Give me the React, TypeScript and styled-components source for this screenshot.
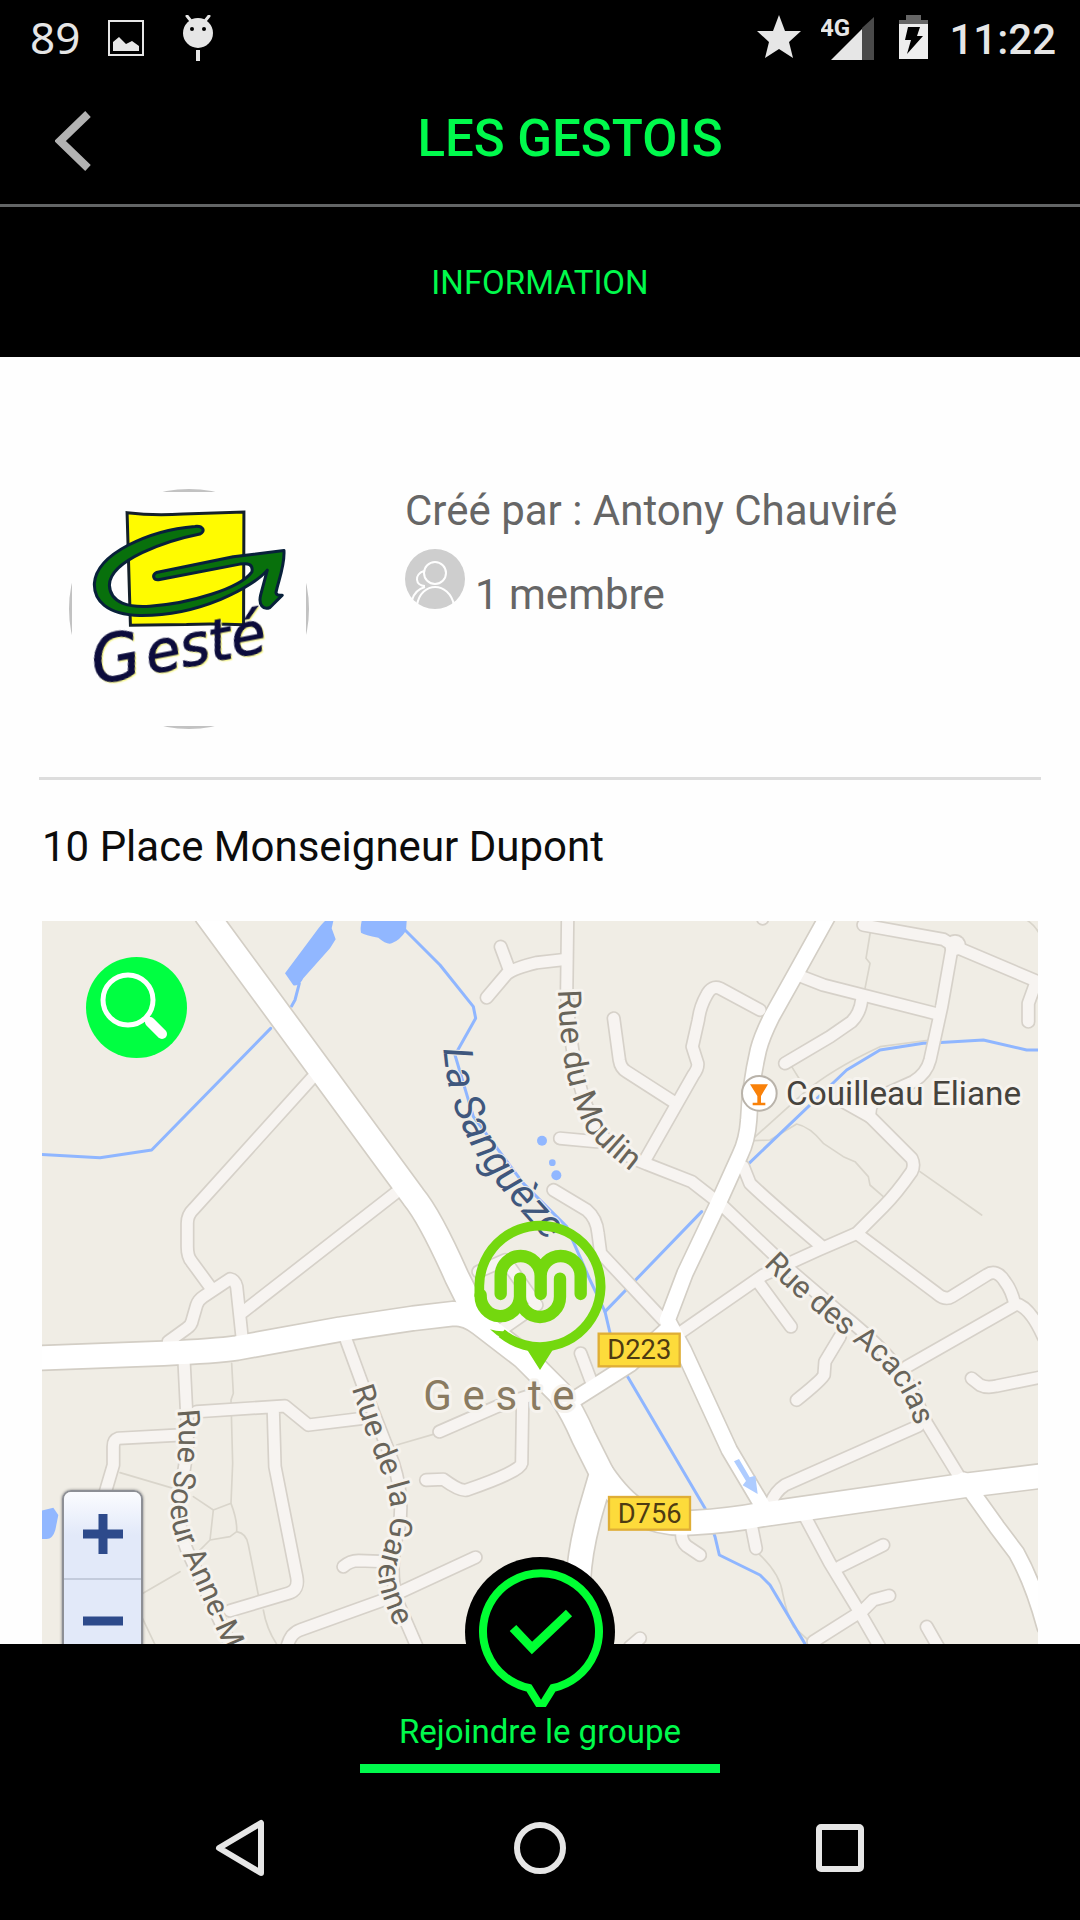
import React from "react";
import styled, { createGlobalStyle } from "styled-components";

const GREEN = "#00fa4c";

const GlobalStyle = createGlobalStyle`
  * { box-sizing: border-box; }
  body { margin: 0; background: #000; font-family: Roboto, "Noto Sans", sans-serif; }
  button { border: 0; padding: 0; margin: 0; background: none; font: inherit; color: inherit; cursor: pointer; }
  svg { display: block; }
`;

const Screen = styled.div`
  display: flex;
  flex-direction: column;
  min-height: 100vh;
  background: #000;
`;

const StatusBar = styled.div`
  display: flex;
  align-items: center;
  justify-content: space-between;
  height: 75px;
  padding: 0 24px 0 30px;
  color: #e6e6e6;
`;

const StatusGroup = styled.div<{ $gap: number }>`
  display: flex;
  align-items: center;
  gap: ${(p) => p.$gap}px;
`;

const BatteryLevel = styled.span`
  padding-bottom: 2px;
  font: 400 44px/48px "Noto Sans", sans-serif;
`;

const Clock = styled.span`
  font-size: 42px;
  line-height: 48px;
  font-weight: 500;
  padding-top: 4px;
`;

const Header = styled.header`
  display: flex;
  align-items: center;
  height: 132px;
  padding-right: 60px;
  border-bottom: 3px solid #636566;
`;

const BackButton = styled.button`
  display: flex;
  justify-content: center;
  width: 120px;
  padding: 2px 0 0 26px;
`;

const Title = styled.h1`
  flex: 1;
  margin: 0;
  padding-bottom: 2px;
  text-align: center;
  color: ${GREEN};
  font-size: 51px;
  line-height: 60px;
  font-weight: 500;
`;

const TabBar = styled.nav`
  display: flex;
  justify-content: center;
  align-items: center;
  height: 150px;
  padding-top: 2px;
`;

const Tab = styled.button`
  color: ${GREEN};
  font-size: 33px;
  line-height: 40px;
`;

const Content = styled.main`
  flex: 1;
  display: flex;
  flex-direction: column;
  padding: 132px 39px 0;
  background: #fefefe;
`;

const Profile = styled.section`
  display: flex;
  gap: 96px;
  padding: 0 30px 48px;
  border-bottom: 3px solid #dddddd;
`;

const Details = styled.div`
  color: #666;
  font-size: 42px;
  line-height: 44px;
`;

const Creator = styled.p`
  margin: 0;
`;

const Members = styled.p`
  display: flex;
  align-items: flex-start;
  gap: 10px;
  margin: 16px 0 0;
`;

const MemberCount = styled.span`
  padding-top: 24px;
`;

const Address = styled.p`
  margin: 0;
  padding: 43px 3px 50px;
  color: #0c0c0c;
  font-size: 42px;
  line-height: 48px;
`;

const MapFrame = styled.section`
  position: relative;
  flex: 1;
  display: flex;
  min-height: 480px;
  margin: 0 3px;
  overflow: hidden;
  background: #f0ede5;
`;

const MapDrawing = styled.svg`
  flex: 1;
  width: 100%;
  height: 723px;
  font-family: Roboto, sans-serif;
`;

const SearchButton = styled.button`
  position: absolute;
  top: 36px;
  left: 44px;
  width: 101px;
  height: 101px;
  border-radius: 50%;
  background: #00ff41;
`;

const ZoomControl = styled.div`
  position: absolute;
  bottom: -22px;
  left: 20px;
  display: flex;
  flex-direction: column;
  width: 81px;
  border: 2px solid #8d8f95;
  border-radius: 9px;
  box-shadow: 0 0 3px #777;
  overflow: hidden;
`;

const ZoomButton = styled.button<{ $first?: boolean }>`
  display: flex;
  align-items: center;
  justify-content: center;
  height: 86px;
  padding-bottom: 2px;
  border-top: ${(p) => (p.$first ? "0" : "2px solid #c3cbdc")};
  background: ${(p) => (p.$first ? "linear-gradient(#fbfcff, #e2e9f9 50%)" : "#e2e9f9")};
`;

const Footer = styled.footer`
  position: relative;
  display: flex;
  justify-content: center;
  height: 129px;
`;

const JoinButton = styled.button`
  display: flex;
  align-items: flex-end;
  justify-content: center;
  width: 360px;
  padding-bottom: 12px;
  border-bottom: 9px solid ${GREEN};
  color: ${GREEN};
  font-size: 33px;
  line-height: 40px;
`;

const JoinBadge = styled.span`
  position: absolute;
  top: -87px;
  left: 50%;
  width: 150px;
  height: 150px;
  margin-left: -75px;
  border-radius: 50%;
  background: #000;
`;

const SystemNav = styled.nav`
  display: flex;
  height: 147px;
  padding: 3px 90px 0;
`;

const NavButton = styled.button`
  flex: 1;
  display: flex;
  align-items: center;
  justify-content: center;
`;

type Point = string;

const waterLines: Point[] = [
  "M20 763L210 773L365 750L722 385M785 318L795 300L808 250",
  "M1125 90L1230 195L1330 320L1337 355L1275 465L1330 650L1480 850L1530 900L1610 980L1680 1140L1725 1235L1745 1320L1790 1425L2025 1825L2055 1910L2068 1965L2190 2025L2220 2055L2330 2240",
  "M1725 1235L2015 935M2157 790L2450 510L2550 450L2680 430L2720 428L2860 420L2990 450L3030 450",
];

const lakes: Point[] = [
  "M885 63L910 63L905 85L917 118L900 145L820 235Q808 260 790 256L765 220L860 92Q875 72 885 63Z",
  "M995 63Q990 85 993 98Q1005 105 1045 113Q1070 135 1085 130Q1110 120 1128 92L1130 63Z",
  "M30 1833L70 1823L85 1845L76 1890Q68 1917 50 1917L30 1917Z",
];

const footpaths: Point[] = [
  "M605 1390L610 1480L603 1500L608 1690L603 1810L550 1830L490 1790M270 1718L430 1765M550 1830L540 1920L500 1960M603 1810Q622 1860 620 1895L600 1910L540 1920M620 1895Q650 1900 655 1935L685 2085M700 2130Q710 2190 745 2240M330 2085L450 2015M335 2150L378 2240M1100 1635L1220 1600",
  "M2522 90L2508 175L2520 190L2505 265M2285 500L2310 540M2170 715L2320 580Q2400 510 2550 440L2700 420M2170 722L2220 720L2300 672Q2340 680 2380 730L2440 770L2475 785L2515 830L2520 855L2560 890M2670 815L2855 945M2990 60Q3015 75 3030 105",
  "M2185 1960Q2250 2020 2258 2080Q2270 2140 2290 2180L2340 2225",
];

const streets: Point[] = [
  "M845 535L490 928Q472 945 472 970L472 1040Q472 1070 485 1085L540 1160",
  "M1095 880L640 1235",
  "M415 1325L470 1285Q485 1275 487 1260L500 1215Q505 1200 520 1190L600 1137Q615 1140 620 1160L636 1310",
  "M1370 293L1430 222Q1450 205 1520 188L1610 178M1412 140L1438 210",
  "M1613 50L1610 280Q1630 600 1720 710Q1770 765 1850 792L1985 845L2075 915L2280 1110L2420 1230Q2600 1370 2650 1480L2690 1570L2800 1750",
  "M1590 715L1700 725",
  "M1751 355L1768 480Q1772 505 1790 515L1930 605",
  "M2190 330L2070 265Q2045 255 2030 285Q2010 320 2005 360L1987 440L2003 490Q2005 505 1990 525L1845 780",
  "M2500 75L2740 118L2775 140L3040 252",
  "M2765 150L2735 320L2700 480Q2690 520 2650 545L2560 585Q2515 600 2520 650L2645 775Q2655 795 2645 815Q2600 880 2560 920L2480 1000L2365 1050L2200 1125L1955 1295",
  "M2315 230L2380 255L2715 340",
  "M2495 300Q2490 340 2465 365L2400 410L2265 490",
  "M3015 255L2995 310L2995 365",
  "M2440 605L2520 650",
  "M2140 800L2160 850Q2200 890 2370 1035",
  "M2480 1000L2720 1180Q2745 1202 2765 1190L2870 1125Q2900 1105 2925 1145Q2945 1170 2955 1215L2630 1400M2955 1210Q3000 1220 3040 1310",
  "M2180 1140L2283 1280",
  "M2430 1310L2385 1385L2382 1425Q2375 1440 2300 1500",
  "M2825 1435L2850 1455Q2870 1465 2900 1458L3040 1430",
  "M2665 1578L2265 1755Q2235 1775 2222 1810",
  "M1955 1905Q1955 1925 1970 1938L2010 1965",
  "M2165 1880L2178 1945M2325 1850L2400 1990L2485 2130L2560 2260M2430 2000L2560 1935M2350 2225L2500 2130L2530 2100L2578 2087M2690 2180L2730 2250M1800 2240L1830 2215",
  "M1652 1360L1682 1440M1570 870L1670 930Q1700 955 1704 1000L1712 1060L1900 1260",
  "M462 1380L470 1540Q480 1650 450 1770Q435 1880 480 1970L610 2250",
  "M500 1535L765 1518L835 1575L1000 1555M730 1535L735 1700L800 2030Q808 2070 775 2080L600 2132",
  "M450 1605L265 1615Q250 1620 250 1640L250 1695L222 1790",
  "M945 1310L1000 1460L1090 1690Q1125 1800 1105 1890Q1075 2000 1100 2100L1165 2250",
  "M1228 1595L1400 1520L1490 1490M1478 1500L1475 1690Q1470 1715 1310 1770Q1290 1775 1240 1738L1188 1740",
  "M940 2000Q960 1982 985 1982L1070 1985M1337 1972L1060 2100L810 2190Q780 2200 770 2245",
  "M1345 1115L1425 1080L1520 1215L1405 1295",
];

const mediumRoads: Point[] = [
  "M2392 50L2295 225L2225 350Q2195 410 2185 450Q2160 560 2156 660Q2152 720 2130 765L2060 920L1965 1120L1912 1260L1960 1350L2098 1650L2205 1830",
  "M1630 1500L1800 1392L1910 1290",
  "M2800 1740L2900 1880L2960 1960Q3010 2050 3045 2180",
];

const majorRoads: Point[] = [
  "M530 45L1150 890Q1200 950 1280 1130L1340 1250",
  "M20 1374L400 1360Q560 1353 620 1344L930 1288L1150 1255L1270 1241Q1310 1240 1350 1270L1480 1370L1590 1480Q1630 1540 1660 1610L1715 1720L1680 1840Q1650 1950 1645 2040L1640 2240",
  "M1715 1720C1790 1830 1860 1878 1990 1868Q2100 1862 2200 1843L2800 1757L3050 1726",
];

function Roads({ paths, width, color }: { paths: Point[]; width: number; color: string }) {
  return (
    <g fill="none" stroke={color} strokeWidth={width} strokeLinecap="round" strokeLinejoin="round">
      {paths.map((d) => (
        <path key={d} d={d} />
      ))}
    </g>
  );
}

function RoadSign({ x, y, label }: { x: number; y: number; label: string }) {
  return (
    <g>
      <rect x={x + 4} y={y + 4} width="243" height="98" fill="#fddb3b" stroke="#dfae36" strokeWidth="7" />
      <text x={x + 126} y={y + 81} fontSize="82" fill="#4d3b12" textAnchor="middle">
        {label}
      </text>
    </g>
  );
}

const labelPaths = [
  { id: "moulin", d: "M1584 270C1590 480 1620 600 1675 700Q1735 770 1860 856", text: "Rue du Moulin", size: 97 },
  { id: "acacias", d: "M2200 1095Q2290 1185 2345 1225L2440 1305Q2530 1365 2590 1440Q2635 1500 2670 1620", text: "Rue des Acacias", size: 92 },
  { id: "garenne", d: "M965 1465L1012 1610L1060 1730Q1090 1810 1080 1880C1070 1930 1042 1990 1046 2040Q1055 2100 1110 2210", text: "Rue de la Garenne", size: 93 },
  { id: "soeur", d: "M442 1530C460 1680 418 1740 423 1840Q425 1900 470 1990L600 2280", text: "Rue Soeur Anne-M", size: 92 },
];

function TownMap() {
  const halo = "#f6f3ee";
  return (
    <MapDrawing viewBox="36 63 2988 2169" preserveAspectRatio="xMidYMid slice" role="img" aria-label="Geste">
      <rect x="-2000" y="-2000" width="8000" height="8000" fill="#f0ede5" />
      <g fill="#91b7ff">
        {lakes.map((d) => (
          <path key={d} d={d} />
        ))}
        <circle cx="1536" cy="722" r="15" />
        <circle cx="1567" cy="788" r="10" />
        <circle cx="1579" cy="826" r="15" />
      </g>
      <Roads paths={footpaths} width={5} color="#d9d5cb" />
      <Roads paths={waterLines} width={9} color="#8fb6ff" />
      <Roads paths={streets} width={43} color="#d6d1c9" />
      <circle cx="2775" cy="136" r="34" fill="#d6d1c9" />
      <circle cx="2198" cy="57" r="20" fill="#d6d1c9" />
      <Roads paths={mediumRoads} width={55} color="#d3cec5" />
      <Roads paths={majorRoads} width={80} color="#d3cec5" />
      <Roads paths={streets} width={33} color="#f7f4f1" />
      <circle cx="2775" cy="136" r="29" fill="#f7f4f1" />
      <circle cx="2198" cy="57" r="15" fill="#f7f4f1" />
      <Roads paths={mediumRoads} width={45} color="#fff" />
      <Roads paths={majorRoads} width={70} color="#fff" />
      <path d="M2112 1684L2127 1677L2159 1732L2176 1727L2183 1782L2138 1756L2148 1743Z" fill="#aeccff" />

      <defs>
        {labelPaths.map((l) => (
          <path key={l.id} id={l.id} d={l.d} />
        ))}
        <path id="river" d="M1240 446Q1250 575 1290 665Q1340 785 1425 880Q1490 955 1620 1100" />
      </defs>
      <g fill="#68645a" stroke={halo} strokeWidth="18" strokeLinejoin="round" style={{ paintOrder: "stroke" }}>
        {labelPaths.map((l) => (
          <text key={l.id} fontSize={l.size}>
            <textPath href={`#${l.id}`}>{l.text}</textPath>
          </text>
        ))}
        <text fontSize="122" fontStyle="italic" fill="#3f577d" stroke="#f0ede5" strokeWidth="6">
          <textPath href="#river">La Sanguèze</textPath>
        </text>
        <text x="1180" y="1530" fontSize="126" fill="#8a7b61" letterSpacing="32">
          Geste
        </text>
        <text x="2268" y="614" fontSize="100" fill="#46433d">
          Couilleau Eliane
        </text>
      </g>

      <circle cx="2188" cy="580" r="52" fill="#fff" stroke="#b9b3aa" strokeWidth="6" />
      <path d="M2160 553H2214L2193 588V608H2206V616H2168V608H2182V588Z" fill="#f98109" />
      <RoadSign x={1702} y={1297} label="D223" />
      <RoadSign x={1733} y={1787} label="D756" />

      <g transform="translate(1230 900)" fill="none" stroke="#74d80e" strokeLinecap="round">
        <path d="M185 400A182 182 0 1 0 118 257V290" strokeWidth="29" strokeLinecap="butt" />
        <path d="M122 285A59 61 0 0 0 240 290V236M240 290A60 61 0 0 0 360 290V236" strokeWidth="37" />
        <path d="M182 282V228A60 60 0 0 1 302 228V282M302 228A60 60 0 0 1 422 228V282" strokeWidth="37" />
        <path d="M150 388Q175 396 200 393L192 418Q170 408 150 388ZM262 450H338L300 510Z" fill="#74d80e" stroke="none" />
      </g>
    </MapDrawing>
  );
}

function Logo() {
  return (
    <svg width="240" height="240" viewBox="88 87 719 719" role="img" aria-label="Gesté">
      <circle cx="447.500" cy="446.500" r="355" fill="none" stroke="#c2c2c2" strokeWidth="9" />
      <rect x="97" y="96" width="701" height="701" fill="#fefefe" />
      <path d="M262 158Q340 168 430 162L612 156L611 494Q520 490 440 493L272 495Q266 300 262 158Z" fill="#fffb00" stroke="#14202a" strokeWidth="9" />
      <path
        d="M465 199C490 196 498 214 480 222C380 242 210 300 209 375C211 430 270 442 330 438C450 430 600 385 636 335C640 312 625 308 600 312L360 358C340 362 336 345 350 337L580 290L732 271C735 320 712 370 708 398C710 408 720 405 727 405L690 442C670 450 655 435 662 405L682 330C640 380 480 468 300 466C200 463 162 420 164 370C170 280 330 210 465 199Z"
        fill="#08700c"
        stroke="#08203a"
        strokeWidth="9"
        strokeLinejoin="round"
      />
      <text
        transform="translate(168 672) rotate(-11)"
        fontFamily="DejaVu Sans, sans-serif"
        fontStyle="italic"
        fontWeight="200"
        fontSize="170"
        fill="#0c0c3c"
        stroke="#0c0c3c"
        strokeWidth="3"
        style={{ filter: "drop-shadow(3px 4px 2px #f7f78a)" }}
      >
        <tspan fontSize="190">G</tspan>
        <tspan dx="16">esté</tspan>
      </text>
    </svg>
  );
}

export default function App() {
  return (
    <Screen>
      <GlobalStyle />
      <StatusBar>
        <StatusGroup $gap={28}>
          <BatteryLevel>89</BatteryLevel>
          <svg width="36" height="36" viewBox="0 0 36 36">
            <rect x="1" y="1" width="34" height="34" fill="none" stroke="#e6e6e6" strokeWidth="2" />
            <path d="M5 31V22L11 17L18 24L24 21L31 26V31Z" fill="#e6e6e6" />
          </svg>
          <svg width="54" height="46" viewBox="0 0 54 46">
            <circle cx="26" cy="18" r="15" fill="#e6e6e6" />
            <path d="M15 1L19 6M37 1L33 6" stroke="#e6e6e6" strokeWidth="3" strokeLinecap="round" />
            <path d="M26 35V46" stroke="#e6e6e6" strokeWidth="4" />
            <circle cx="20" cy="14" r="2" />
            <circle cx="32" cy="14" r="2" />
          </svg>
        </StatusGroup>
        <StatusGroup $gap={20}>
          <svg width="44" height="46" viewBox="0 0 44 46">
            <path d="M22 0L28 16H44L32 27L36 43L22 34L8 43L12 27L0 16H16Z" fill="#e6e6e6" />
          </svg>
          <svg width="58" height="58" viewBox="0 -8 58 58">
            <path d="M41 11L53 0V43H41Z" fill="#4a4a4a" />
            <path d="M10 43L41 12V43Z" fill="#e6e6e6" />
            <text x="-1" y="19" fontSize="24" fontWeight="700" fill="#e6e6e6" fontFamily="Roboto, sans-serif">
              4G
            </text>
          </svg>
          <svg width="30" height="46" viewBox="0 0 30 46">
            <path d="M7 0H22V5H29V10H0V5H7Z" fill="#666" />
            <path d="M0 9H29V44H0Z" fill="#eee" />
            <path d="M9 12H21L18 21H24L8 39L12 25H6Z" fill="#000" />
          </svg>
          <Clock>11:22</Clock>
        </StatusGroup>
      </StatusBar>

      <Header>
        <BackButton aria-label="Retour">
          <svg width="36" height="60" viewBox="0 0 36 60">
            <path d="M33 3L5 30L33 57" fill="none" stroke="#b2b2b2" strokeWidth="8" />
          </svg>
        </BackButton>
        <Title>LES GESTOIS</Title>
      </Header>
      <TabBar>
        <Tab>INFORMATION</Tab>
      </TabBar>

      <Content>
        <Profile>
          <Logo />
          <Details>
            <Creator>Créé par : Antony Chauviré</Creator>
            <Members>
              <svg width="60" height="60" viewBox="0 0 60 60">
                <circle cx="30" cy="30" r="30" fill="#cecece" />
                <g fill="none" stroke="#fefefe" strokeWidth="2">
                  <circle cx="30" cy="24" r="11" />
                  <path d="M19 22C9 25 10 37 20 37M12 56C16 32 44 32 49 56M7 51C9 44 13 40 20 38" />
                </g>
              </svg>
              <MemberCount>1 membre</MemberCount>
            </Members>
          </Details>
        </Profile>
        <Address>10 Place Monseigneur Dupont</Address>
        <MapFrame>
          <TownMap />
          <SearchButton aria-label="Rechercher">
            <svg width="101" height="101" viewBox="0 0 101 101">
              <circle cx="42" cy="43" r="25" fill="none" stroke="#fff" strokeWidth="5" />
              <path d="M60 61L64 65" stroke="#fff" strokeWidth="7" />
              <path d="M64 65L76 77" stroke="#fff" strokeWidth="10" strokeLinecap="round" />
            </svg>
          </SearchButton>
          <ZoomControl>
            <ZoomButton $first aria-label="Zoom avant">
              <svg width="40" height="40" viewBox="0 0 40 40">
                <path d="M20 0V40M0 20H40" stroke="#2d4a8b" strokeWidth="9" />
              </svg>
            </ZoomButton>
            <ZoomButton aria-label="Zoom arrière">
              <svg width="40" height="40" viewBox="0 0 40 40">
                <path d="M0 20H40" stroke="#2d4a8b" strokeWidth="9" />
              </svg>
            </ZoomButton>
          </ZoomControl>
        </MapFrame>
      </Content>

      <Footer>
        <JoinBadge>
          <svg width="150" height="150" viewBox="0 0 150 150">
            <g fill="none" stroke="#00ff33">
              <path d="M64 131A58 58 0 1 1 88 131L78 147H74Z" strokeWidth="8" />
              <path d="M48 71L67 91L104 56" strokeWidth="9" />
            </g>
          </svg>
        </JoinBadge>
        <JoinButton>Rejoindre le groupe</JoinButton>
      </Footer>
      <SystemNav>
        <NavButton aria-label="Précédent">
          <svg width="54" height="58" viewBox="0 0 54 58">
            <path d="M48 4V54L6 29Z" fill="none" stroke="#e6e6e6" strokeWidth="6" strokeLinejoin="round" />
          </svg>
        </NavButton>
        <NavButton aria-label="Accueil">
          <svg width="52" height="52" viewBox="0 0 52 52">
            <circle cx="26" cy="26" r="23" fill="none" stroke="#e6e6e6" strokeWidth="6" />
          </svg>
        </NavButton>
        <NavButton aria-label="Applications récentes">
          <svg width="48" height="48" viewBox="0 0 48 48">
            <rect x="3" y="3" width="42" height="42" rx="2" fill="none" stroke="#e6e6e6" strokeWidth="6" />
          </svg>
        </NavButton>
      </SystemNav>
    </Screen>
  );
}
